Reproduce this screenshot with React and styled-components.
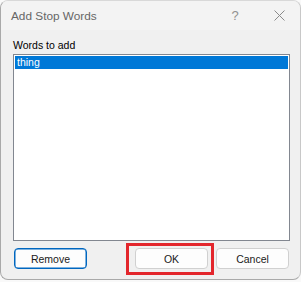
import React from "react";
import styled, { createGlobalStyle } from "styled-components";

const Global = createGlobalStyle`
  html, body { margin: 0; padding: 0; background: #f9f9f9; }
  body { width: 301px; height: 282px; overflow: hidden; font-family: "Liberation Sans", Arial, sans-serif; }
`;

const Window = styled.div`
  box-sizing: border-box;
  width: 301px;
  height: 280px;
  border: 1px solid #a9a9a9;
  border-top-color: #d8d8d8;
  border-right-color: #c8c8c8;
  border-radius: 8px;
  background: #f0f0f0;
  display: flex;
  flex-direction: column;
  overflow: hidden;
`;

const TitleBar = styled.div`
  height: 29px;
  background: #f3f3f3;
  display: flex;
  align-items: center;
  padding-left: 10px;
  flex-shrink: 0;
`;

const Title = styled.div`
  flex: 1;
  font-size: 11.8px;
  color: #666;
  padding-top: 1px;
`;

const TitleButton = styled.div`
  width: ${(p) => p.$w}px;
  display: flex;
  justify-content: center;
  align-items: center;
  color: #909090;
  font-size: 13px;
  font-weight: 300;
`;

const Body = styled.div`
  flex: 1;
  display: flex;
  flex-direction: column;
  padding: 9px 10px 10px 12px;
`;

const Label = styled.div`
  font-size: 10.5px;
  line-height: 12px;
  color: #000;
  margin-bottom: 3px;
`;

const ListBox = styled.div`
  box-sizing: border-box;
  height: 187px;
  width: 277px;
  border: 1px solid #828790;
  background: #fff;
  padding: 1px 1px;
`;

const ListItem = styled.div`
  height: 13px;
  line-height: 13px;
  font-size: 10.5px;
  padding-left: 2px;
  color: ${(p) => (p.$selected ? "#fff" : "#000")};
  background: ${(p) => (p.$selected ? "#0078d7" : "transparent")};
`;

const ButtonRow = styled.div`
  display: flex;
  align-items: center;
  margin-top: 7px;
  padding: 0 1px;
`;

const Spacer = styled.div`
  flex: 1;
`;

const Button = styled.button`
  box-sizing: border-box;
  flex-shrink: 0;
  width: 73px;
  height: 21px;
  margin-left: ${(p) => p.$ml || 0}px;
  border-radius: 4px;
  border: 1px solid ${(p) => (p.$focused ? "#0067c0" : "#d0d0d0")};
  box-shadow: ${(p) => (p.$focused ? "inset 0 0 0 0.5px #0067c0" : "none")};
  background: #fdfdfd;
  font-family: "Liberation Sans", Arial, sans-serif;
  font-size: 10.5px;
  color: #1a1a1a;
  padding: 0;
`;

const Highlight = styled.div`
  position: relative;
  flex-shrink: 0;
`;

const RedBox = styled.div`
  position: absolute;
  left: -9px;
  top: -5px;
  right: -6px;
  bottom: -6px;
  border: 3px solid #e3262c;
  pointer-events: none;
`;

function CloseIcon() {
  return (
    <svg width="11" height="11" viewBox="0 0 11 11">
      <path d="M0.5 0.5 L10.5 10.5 M10.5 0.5 L0.5 10.5" stroke="#8a8a8a" strokeWidth="1" fill="none" />
    </svg>
  );
}

export default function App() {
  return (
    <>
      <Global />
      <Window>
        <TitleBar>
          <Title>Add Stop Words</Title>
          <TitleButton $w={46}>?</TitleButton>
          <TitleButton $w={42}>
            <CloseIcon />
          </TitleButton>
        </TitleBar>
        <Body>
          <Label>Words to add</Label>
          <ListBox>
            <ListItem $selected>thing</ListItem>
          </ListBox>
          <ButtonRow>
            <Button $focused>Remove</Button>
            <Spacer />
            <Highlight>
              <Button>OK</Button>
              <RedBox />
            </Highlight>
            <Button $ml={8}>Cancel</Button>
          </ButtonRow>
        </Body>
      </Window>
    </>
  );
}
